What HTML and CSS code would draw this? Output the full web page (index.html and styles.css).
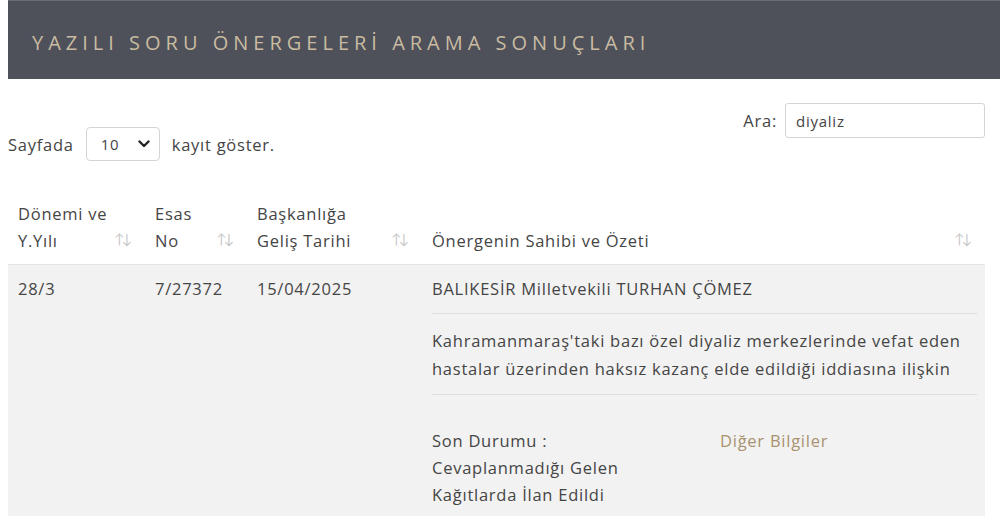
FILE: index.html
```html
<!DOCTYPE html>
<html lang="tr">
<head>
<meta charset="utf-8">
<link rel="stylesheet" href="styles.css">
</head>
<body>
<div class="banner"><h1 class="banner-title">YAZILI SORU ÖNERGELERİ ARAMA SONUÇLARI</h1></div>
<div class="controls">
  <div class="length">
    <span>Sayfada</span>
    <div class="select"><span>10</span>
      <svg class="chev" width="12" height="8" viewBox="0 0 12 8"><path d="M1.5 1.5 L6 6 L10.5 1.5" fill="none" stroke="#222" stroke-width="2.4" stroke-linecap="round" stroke-linejoin="round"/></svg>
    </div>
    <span>kayıt göster.</span>
  </div>
  <div class="filter">
    <span>Ara:</span>
    <div class="input">diyaliz</div>
  </div>
</div>
<table class="results">
  <thead>
    <tr>
      <th class="c1"><div class="th"><span>Dönemi ve<br>Y.Yılı</span><span class="sort">↑↓</span></div></th>
      <th class="c2"><div class="th"><span>Esas<br>No</span><span class="sort">↑↓</span></div></th>
      <th class="c3"><div class="th"><span>Başkanlığa<br>Geliş Tarihi</span><span class="sort">↑↓</span></div></th>
      <th class="c4"><div class="th"><span>Önergenin Sahibi ve Özeti</span><span class="sort">↑↓</span></div></th>
    </tr>
  </thead>
  <tbody>
    <tr>
      <td>28/3</td>
      <td>7/27372</td>
      <td>15/04/2025</td>
      <td class="detail">
        <div class="owner">BALIKESİR Milletvekili TURHAN ÇÖMEZ</div>
        <div class="summary">Kahramanmaraş'taki bazı özel diyaliz merkezlerinde vefat eden hastalar üzerinden haksız kazanç elde edildiği iddiasına ilişkin</div>
        <div class="status">
          <div class="status-text">Son Durumu :<br>Cevaplanmadığı Gelen<br>Kağıtlarda İlan Edildi</div>
          <a class="more">Diğer Bilgiler</a>
        </div>
      </td>
    </tr>
  </tbody>
</table>
</body>
</html>
```
FILE: styles.css
```css
html, body { margin: 0; padding: 0; background: #fff; }
body {
  padding: 0 15px 0 8px;
  font-family: "Open Sans", "Lato", sans-serif;
  font-size: 16.5px;
  letter-spacing: 0.75px;
  color: #454545;
}
.banner {
  background: #4e515a;
  height: 79px;
  margin-right: -15px;
  display: flex;
  align-items: center;
  padding-left: 24px;
  border-top: 1px solid #6b6d70;
  box-sizing: border-box;
}
.banner-title {
  margin: 0;
  font-weight: 400;
  font-size: 20px;
  letter-spacing: 5px;
  color: #c9bba1;
  padding-top: 4px;
  white-space: nowrap;
}
.controls {
  display: flex;
  justify-content: space-between;
  align-items: flex-start;
  padding-top: 24px;
  height: 121px;
  box-sizing: border-box;
}
.length {
  display: flex;
  align-items: center;
  gap: 12px;
  margin-top: 24px;
}
.select {
  width: 74px;
  height: 34px;
  border: 1px solid #d5d5d5;
  border-radius: 4px;
  display: flex;
  align-items: center;
  justify-content: space-between;
  padding: 0 9px 0 14px;
  box-sizing: border-box;
  font-size: 15px;
  color: #444;
}
.filter {
  display: flex;
  align-items: center;
  gap: 8px;
}
.input {
  width: 200px;
  height: 35px;
  border: 1px solid #d5d5d5;
  border-radius: 3px;
  box-sizing: border-box;
  padding: 0 10px;
  display: flex;
  align-items: center;
  font-size: 15px;
  color: #444;
}
.results {
  width: 977px;
  border-collapse: collapse;
  table-layout: fixed;
}
.results th, .results td { box-sizing: border-box; }
.c1 { width: 137px; }
.c2 { width: 102px; }
.c3 { width: 175px; }
.results th {
  font-weight: 400;
  text-align: left;
  vertical-align: bottom;
  padding: 0 12px 10px 10px;
  border-bottom: 1px solid #e4e4e4;
  line-height: 27px;
}
.th { display: flex; align-items: flex-end; justify-content: space-between; }
.sort { color: #c8c8c8; font-size: 14px; letter-spacing: -3px; padding-right: 4px; margin-bottom: 2px; }
.results td {
  background: #f2f2f2;
  vertical-align: top;
  padding: 10px 10px 8px 10px;
  line-height: 28px;
}
.results td.detail { padding-right: 8px; }
.owner { padding-bottom: 10px; border-bottom: 1px solid #dedede; }
.summary { padding: 13px 0 11px; border-bottom: 1px solid #dedede; }
.status { display: flex; padding-top: 32px; }
.status-text { width: 288px; line-height: 27px; flex: none; }
.more { color: #a8926f; }
```
